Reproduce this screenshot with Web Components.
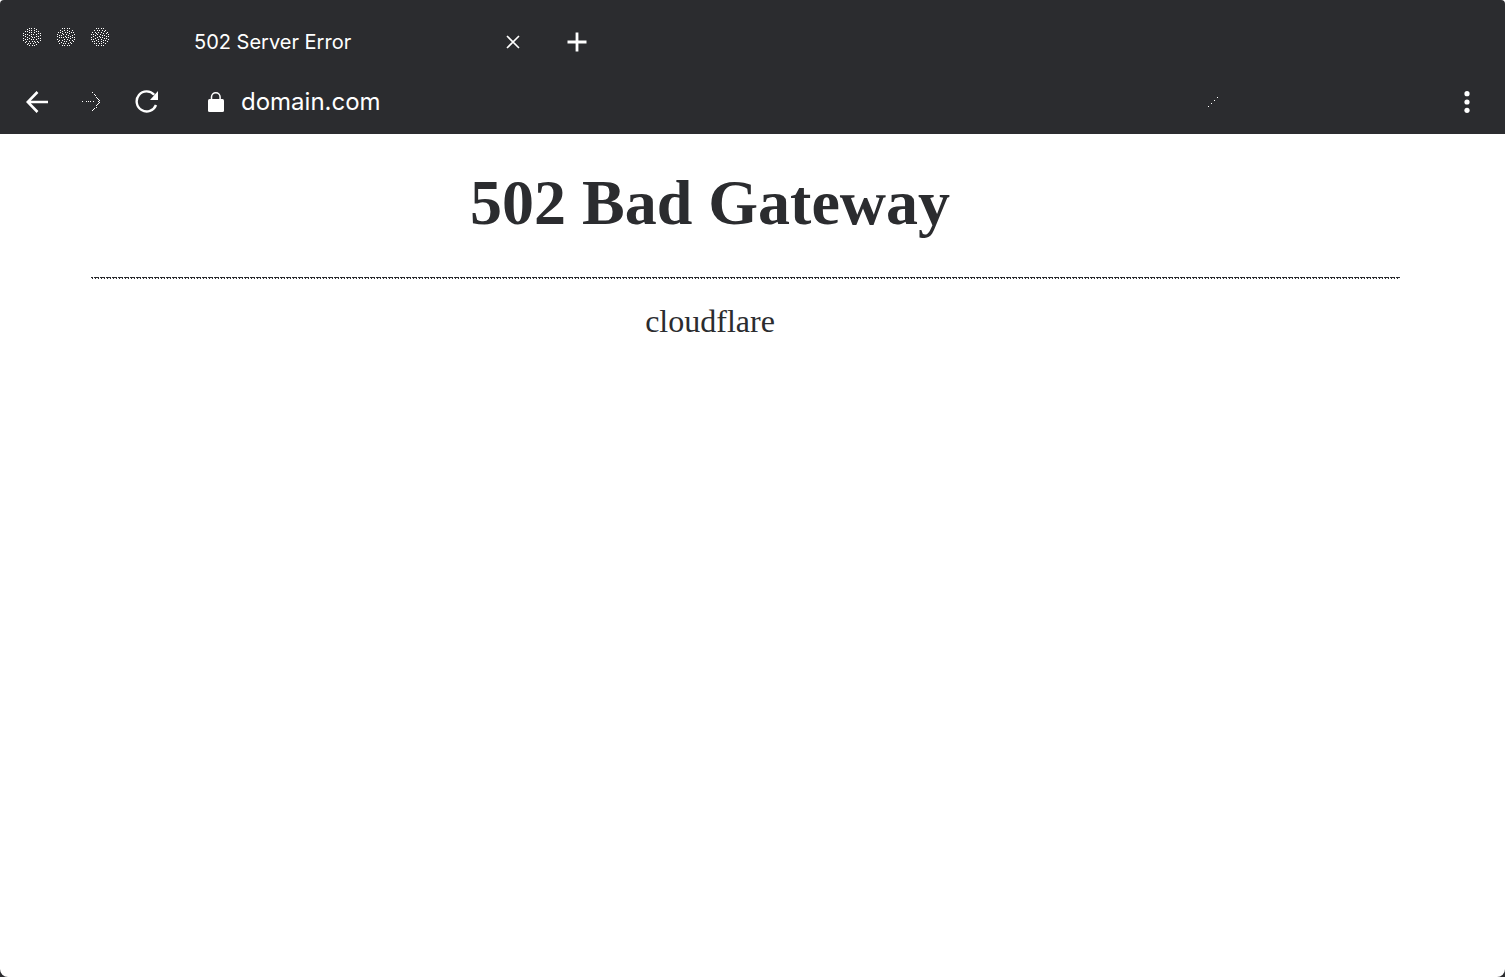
<!DOCTYPE html>
<html lang="en"><head><meta charset="utf-8"><title>502 Server Error</title>
<style>html,body{margin:0;height:100%;background:#fff}body{color:#2b2c2f;font-family:"Liberation Serif",serif}</style></head>
<body>
<browser-window>
<browser-tabs slot="bar">502 Server Error</browser-tabs>
<browser-toolbar slot="bar" address="domain.com"></browser-toolbar>
<error-page><span slot="title">502 Bad Gateway</span>cloudflare</error-page>
</browser-window>
<script>
const reset = `:host,*{box-sizing:border-box}button{appearance:none;background:none;border:0;padding:0;margin:0;color:inherit;display:block;line-height:0}svg{display:block}`;
const define = (name, html) => customElements.define(name, class extends HTMLElement {
  constructor() {
    super();
    this.attachShadow({mode: 'open'}).innerHTML = html;
    const input = this.shadowRoot.querySelector('input');
    if (input) input.value = this.getAttribute('address') || '';
  }
});

/* Stippled disc: single-pixel dots set around concentric rings */
const disc = seed => {
  const taken = new Set();
  let d = '';
  for (const r of [9, 7, 5, 3, 1]) {
    const n = Math.round(r * 2.4);
    for (let i = 0; i < n; i++) {
      const a = (i / n) * Math.PI * 2 + seed * r;
      const x = Math.round(9.5 + r * Math.cos(a)), y = Math.round(9.5 + r * Math.sin(a));
      if (taken.has(`${x - 1},${y}`) || taken.has(`${x + 1},${y}`) || taken.has(`${x},${y}`) || taken.has(`${x},${y - 1}`) || taken.has(`${x},${y + 1}`)) continue;
      taken.add(`${x},${y}`);
      d += `M${x} ${y}h1v1h-1z`;
    }
  }
  return `<svg width="20" height="20" viewBox="0 0 20 20" fill="#fff" shape-rendering="crispEdges"><path d="${d}"/></svg>`;
};

define('browser-window', `<style>${reset}
:host{display:flex;flex-direction:column;min-height:100%;background:#2b2c2f;border-radius:4px 4px 0 0}
header{color:#fff;font-family:Inter,sans-serif}
main{flex:1;background:#fff;border-radius:0 0 8px 8px}
</style><header><slot name="bar"></slot></header><main><slot></slot></main>`);

define('browser-tabs', `<style>${reset}
:host{display:flex;align-items:center;height:72px;padding:12px 22px 0}
.lights{display:flex;gap:14px;padding-bottom:10px}
.tab{display:flex;align-items:center;justify-content:space-between;width:327px;margin-left:84px;font-size:20px;line-height:24px}
.add{margin-left:46px}
</style><div class="lights">${disc(.3)}${disc(.7)}${disc(1.3)}</div>
<div class="tab"><span><slot></slot></span><button aria-label="Close tab"><svg width="16" height="16" viewBox="0 0 16 16" fill="none" stroke="#fff" stroke-width="1.6"><path d="M2 2l12 12M14 2L2 14"/></svg></button></div>
<button class="add" aria-label="New tab"><svg width="20" height="20" viewBox="0 0 20 20" stroke="#fff" stroke-width="2.8"><path d="M10 .5v19M.5 10h19"/></svg></button>`);

define('browser-toolbar', `<style>${reset}
:host{display:flex;align-items:center;height:62px;padding:0 35px 2px 26px}
.fwd{margin-left:34px}.reload{margin-left:33px}.lock{margin-left:49px}
input{flex:1;min-width:0;margin:0 0 0 17px;padding:0;border:0;outline:0;background:none;color:inherit;font:24px/28px Inter,sans-serif}
.edit{margin-right:246px}
</style>
<button aria-label="Back"><svg width="22" height="22" viewBox="0 0 22 22" fill="none" stroke="#fff" stroke-width="2.6"><path d="M11.5 1L1.7 11l9.8 10M2 11h20"/></svg></button>
<button class="fwd" aria-label="Forward"><svg width="20" height="20" viewBox="0 0 20 20" fill="#fff" shape-rendering="crispEdges"><path d="M0 9h1v1h-1zM4 9h1v1h-1zM6 9h1v1h-1zM8 9h1v1h-1zM11 9h1v1h-1zM10 0h1v1h-1zM12 2h1v1h-1zM13 3h1v1h-1zM14 5h1v1h-1zM15 6h1v1h-1zM16 7h1v1h-1zM17 8h1v1h-1zM16 9h1v1h-1zM17 10h1v1h-1zM16 11h1v1h-1zM15 12h1v1h-1zM14 13h1v1h-1zM14 15h1v1h-1zM12 16h1v1h-1zM11 17h1v1h-1zM10 18h1v1h-1z"/></svg></button>
<button class="reload" aria-label="Reload"><svg width="24" height="24" viewBox="0 0 24 24"><path d="M19.2 4.8A10 10 0 1 0 21 15" fill="none" stroke="#fff" stroke-width="2.4"/><path d="M23 1v9h-8z" fill="#fff"/></svg></button>
<svg class="lock" width="16" height="22" viewBox="0 0 16 22"><path d="M3.5 10V6a4.3 4.3 0 0 1 8.6 0v4" fill="none" stroke="#fff" stroke-width="1.5"/><rect y="8" width="16" height="13" rx="1.5" fill="#fff"/></svg>
<input type="text" aria-label="Address">
<svg class="edit" width="10" height="10" viewBox="0 0 10 10" fill="#fff" shape-rendering="crispEdges"><path d="M0 9h1v1h-1zM3 6h1v1h-1zM6 3h1v1h-1zM9 0h1v1h-1z"/></svg>
<button aria-label="Menu"><svg width="6" height="22" viewBox="0 0 6 22" fill="#fff"><circle cx="3" cy="2.7" r="2.6"/><circle cx="3" cy="11" r="2.6"/><circle cx="3" cy="19.3" r="2.6"/></svg></button>`);

define('error-page', `<style>${reset}
:host{display:block;padding:33px 105px 0 91px}
h1,p{margin:0;padding-right:71px;text-align:center}
h1{font-size:64px;line-height:72px}
hr{margin:38px 0 24px;border:0;height:2px;background:repeating-linear-gradient(90deg,#2b2c2f 0 2px,transparent 2px 3px,#2b2c2f 3px 6px) 0 0/100% 1px no-repeat,repeating-linear-gradient(90deg,transparent 0 1px,#2b2c2f 1px 2px,transparent 2px 3px) 0 1px/100% 1px no-repeat}
p{font-size:32px;line-height:36px}
</style><h1><slot name="title"></slot></h1><hr><p><slot></slot></p>`);
</script></body></html>
